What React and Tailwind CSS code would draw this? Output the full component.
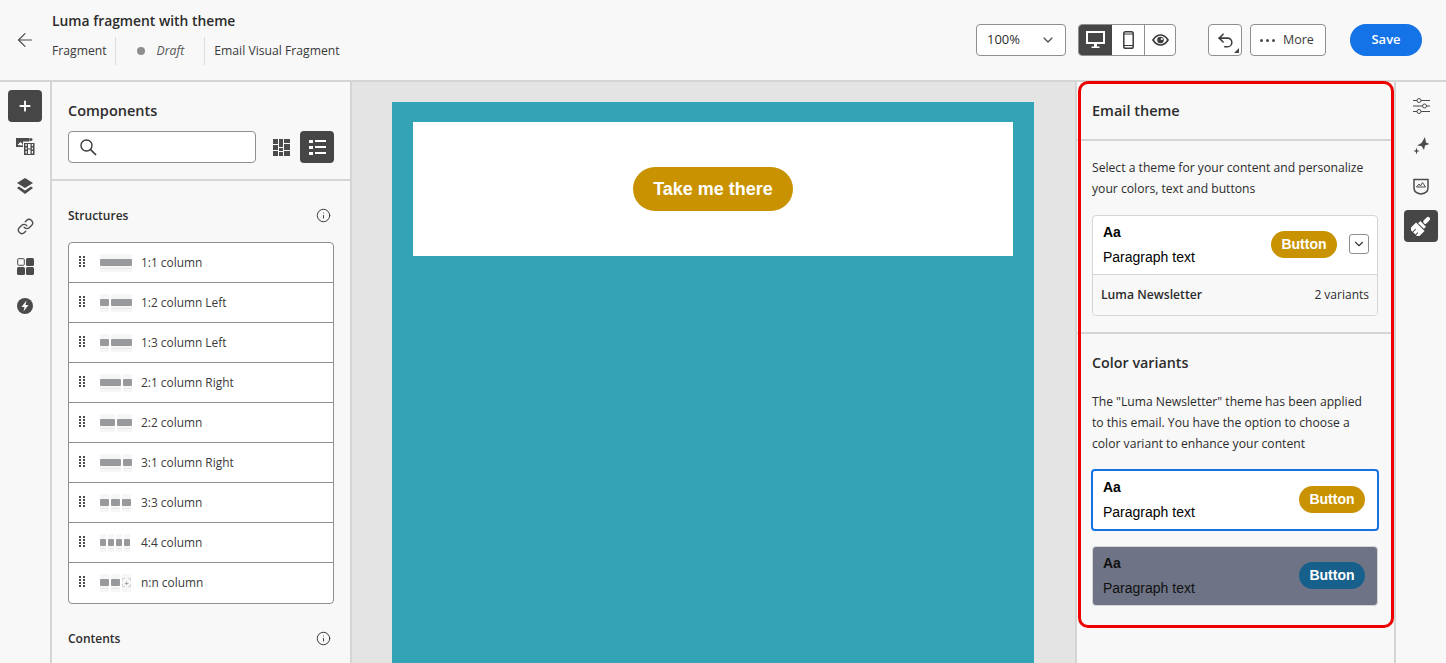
import React from 'react';
import { ArrowLeft, ChevronDown, Plus, Info, Link, Undo2 } from 'lucide-react';

const structures = [
  { label: '1:1 column', cols: [32] },
  { label: '1:2 column Left', cols: [9, 21] },
  { label: '1:3 column Left', cols: [9, 21] },
  { label: '2:1 column Right', cols: [21, 9] },
  { label: '2:2 column', cols: [15, 15] },
  { label: '3:1 column Right', cols: [21, 9] },
  { label: '3:3 column', cols: [9, 9, 9] },
  { label: '4:4 column', cols: [6, 6, 6, 6] },
  { label: 'n:n column', cols: [9, 9], more: true },
];

function Grip() {
  return (
    <svg width="6" height="11" viewBox="0 0 6 11" fill="#4b4b4b" className="shrink-0 mb-[2px]">
      {[0, 3, 6, 9].map((y) => (
        <g key={y}>
          <rect x="0" y={y} width="2" height="2" />
          <rect x="4" y={y} width="2" height="2" />
        </g>
      ))}
    </svg>
  );
}

function ColThumb({ cols, more }) {
  return (
    <div className="flex w-[32px] h-[18px] gap-[2px] shrink-0">
      {cols.map((w, i) => (
        <div key={i} className="flex flex-col bg-[#f6f6f6]" style={{ width: w }}>
          <div className="h-[5px]" />
          <div className="h-[7px] bg-[#97999c] rounded-[1px]" />
          <div className="h-[1px] mt-[2px] bg-[#e8e8e8]" />
        </div>
      ))}
      {more && (
        <div className="w-[9px] flex flex-col bg-[#f6f6f6]">
          <div className="h-[9px] mt-[4px] border border-dashed border-[#d5d5d5] text-[8px] leading-[7px] text-center text-[#777]">+</div>
        </div>
      )}
    </div>
  );
}

function ThemeSample({ extra, color, dark }) {
  return (
    <div className={`flex items-center justify-between h-[58px] pl-[10px] font-['Liberation_Sans',Arial,sans-serif] ${extra ? 'pr-[8px]' : 'pr-[12px]'} ${dark ? 'text-[#111]' : 'text-black'}`}>
      <div className="mt-[2px]">
        <div className="text-[14px] leading-[16px] font-bold mt-[-3px]">Aa</div>
        <div className="text-[14px] leading-[16px] mt-[9px]">Paragraph text</div>
      </div>
      <div className="flex items-center gap-[12px] mt-[-2px]">
        <div className={`w-[66px] h-[27px] rounded-full ${color} text-white text-[14px] font-bold flex items-center justify-center`}>Button</div>
        {extra}
      </div>
    </div>
  );
}

function RailBtn({ active, children }) {
  return (
    <div className={`w-[34px] h-[32px] rounded-[4px] flex items-center justify-center ${active ? 'bg-[#464646] text-white' : 'text-[#4b4b4b]'}`}>
      {children}
    </div>
  );
}

export default function App() {
  return (
    <div className="relative w-[1446px] h-[663px] overflow-hidden bg-[#f8f8f8] text-[#2c2c2c] font-['Open_Sans','Noto_Sans',sans-serif] text-[12.15px]">
      {/* Top bar */}
      <div className="h-[82px] border-b-2 border-[#d5d5d5] flex items-center">
        <ArrowLeft className="w-[22px] h-[22px] ml-[14px] mr-[16px] text-[#4b4b4b]" strokeWidth={1.3} />
        <div className="w-[320px]">
          <div className="text-[13.85px] font-semibold leading-[20px] mt-[-4px]">Luma fragment with theme</div>
          <div className="flex items-center h-[28px] mt-[6px] text-[#3a3a3a] text-[12.2px]">
            <span className="pr-[8px]">Fragment</span>
            <div className="w-[1px] h-[28px] bg-[#dcdcdc]" />
            <span className="w-[8px] h-[8px] rounded-full bg-[#8e8e8e] ml-[21px]" />
            <span className="italic text-[#555] ml-[12px] mr-[20px]">Draft</span>
            <div className="w-[1px] h-[28px] bg-[#dcdcdc]" />
            <span className="ml-[9px]">Email Visual Fragment</span>
          </div>
        </div>
        <div className="flex items-center ml-auto pr-[24px]">
          <div className="w-[90px] h-[32px] bg-white border border-[#8f8f8f] rounded-[4px] flex items-center justify-between pl-[10px] pr-[9px] text-[13px]">
            100%
            <ChevronDown className="w-[16px] h-[16px] text-[#4b4b4b]" strokeWidth={1.8} />
          </div>
          <div className="ml-[12px] h-[32px] flex border border-[#8f8f8f] rounded-[4px] bg-white overflow-hidden">
            <div className="w-[34px] -my-px -ml-px bg-[#464646] flex items-center justify-center">
              <svg width="19" height="18" viewBox="0 0 19 18" fill="#fff">
                <path fillRule="evenodd" d="M0 0h19v13H0zm2 2v9h15V2z" />
                <path d="M8 13h3v2.500H8zM5.500 15.500h8V17h-8z" />
              </svg>
            </div>
            <div className="w-[33px] border-r border-[#8f8f8f] flex items-center justify-center">
              <svg width="11" height="18" viewBox="0 0 11 18" fill="none" stroke="#3c3c3c">
                <rect x="0.800" y="0.800" width="9.400" height="16.400" rx="1.800" strokeWidth="1.500" />
                <path d="M1 3h9" strokeWidth="1" />
                <path d="M1 14.500h9" strokeWidth="1" />
              </svg>
            </div>
            <div className="w-[30px] flex items-center justify-center">
              <svg width="17" height="12" viewBox="0 0 17 12" fill="none">
                <path d="M1 6c2-3.200 4.500-5 7.500-5s5.500 1.800 7.500 5c-2 3.200-4.500 5-7.500 5S3 9.200 1 6z" stroke="#3c3c3c" strokeWidth="1.700" />
                <circle cx="8.500" cy="6" r="3.300" fill="#3c3c3c" />
                <circle cx="9.800" cy="5" r="1.100" fill="#fff" />
              </svg>
            </div>
          </div>
          <div className="relative ml-[32px] w-[34px] h-[32px] bg-white border border-[#8f8f8f] rounded-[4px] flex items-center justify-center text-[#3c3c3c]">
            <Undo2 className="w-[19px] h-[19px]" strokeWidth={1.9} />
            <div className="absolute right-[2px] bottom-[2px] w-0 h-0 border-l-[5px] border-l-transparent border-b-[5px] border-b-[#4b4b4b]" />
          </div>
          <div className="ml-[8px] w-[76px] h-[32px] bg-white border border-[#8f8f8f] rounded-[4px] flex items-center pl-[9px] text-[12.5px] text-[#3c3c3c]">
            <span className="flex gap-[3px] mr-[8px]">
              <span className="w-[3px] h-[3px] rounded-full bg-[#4b4b4b]" />
              <span className="w-[3px] h-[3px] rounded-full bg-[#4b4b4b]" />
              <span className="w-[3px] h-[3px] rounded-full bg-[#4b4b4b]" />
            </span>
            More
          </div>
          <div className="ml-[24px] w-[72px] h-[32px] rounded-full bg-[#1473e6] text-white font-semibold text-[13px] flex items-center justify-center">Save</div>
        </div>
      </div>

      <div className="flex h-[581px]">
        {/* Left rail */}
        <div className="w-[52px] shrink-0 border-r-2 border-[#d5d5d5] flex flex-col items-center pt-[8px] gap-[8px]">
          <RailBtn active><Plus className="w-[16px] h-[16px]" strokeWidth={2.8} /></RailBtn>
          <RailBtn>
            <svg width="19" height="18" viewBox="0 0 19 18" fill="#4b4b4b">
              <path d="M0 1h13.500v3.500H7V10H0z" />
              <path d="M1.500 8l3-3 2 2V8.500z" fill="#fff" />
              <path fillRule="evenodd" d="M8 6h10.500v12H8zm1.500 1v2h1.300V7zm0 3.500v2h1.300v-2zm0 3.500v2.500h1.300V14zm6.300-7v2H17V7zm0 3.500v2H17v-2zm0 3.500v2.500H17V14zM12 7v4.500h2.500V7zm0 5.500V17h2.500v-4.500z" />
              <circle cx="15" cy="2.500" r="1.500" />
            </svg>
          </RailBtn>
          <RailBtn>
            <svg width="18" height="18" viewBox="0 0 18 18" fill="#4b4b4b">
              <path d="M9 1l8 5-8 5-8-5z" />
              <path d="M3 9.500L1 11l8 6 8-6-2-1.500L9 13.500z" />
            </svg>
          </RailBtn>
          <RailBtn><Link className="w-[17px] h-[17px]" strokeWidth={1.9} /></RailBtn>
          <RailBtn>
            <svg width="17" height="17" viewBox="0 0 17 17">
              <rect x="0.700" y="0.700" width="6.600" height="6.600" rx="1" fill="none" stroke="#4b4b4b" />
              <rect x="9" y="0" width="8" height="8" rx="1.500" fill="#4b4b4b" />
              <rect x="0" y="9" width="8" height="8" rx="1.500" fill="#4b4b4b" />
              <rect x="9" y="9" width="8" height="8" rx="1.500" fill="#4b4b4b" />
            </svg>
          </RailBtn>
          <RailBtn>
            <svg width="16" height="16" viewBox="0 0 16 16">
              <circle cx="8" cy="8" r="8" fill="#4b4b4b" />
              <path d="M9.500 2.500L4.500 9h3l-1 4.500L11.500 7h-3z" fill="#fff" />
            </svg>
          </RailBtn>
        </div>

        {/* Components panel */}
        <div className="w-[300px] shrink-0 border-r-2 border-[#d5d5d5]">
          <div className="h-[99px] border-b-2 border-[#d5d5d5] px-[16px]">
            <div className="text-[14.5px] font-semibold leading-[20px] pt-[19px] h-[49px]">Components</div>
            <div className="flex items-center">
              <div className="w-[188px] h-[32px] shrink-0 bg-white border border-[#8f8f8f] rounded-[4px] flex items-center pl-[11px]">
                <svg width="17" height="17" viewBox="0 0 17 17" fill="none" stroke="#3c3c3c" strokeWidth="1.400">
                  <circle cx="6.500" cy="6.500" r="5.500" />
                  <path d="M10.500 10.500l5.500 5.500" strokeWidth="1.700" />
                </svg>
              </div>
              <svg width="17" height="17" viewBox="0 0 17 17" fill="#4b4b4b" className="ml-[17px] shrink-0">
                <path d="M0 0h5v5H0zM0 6h5v5H0zM0 12h5v5H0zM6 0h4v8H6zM6 9h4v3H6zM6 13h4v4H6zM11 0h6v4h-6zM11 5h6v6h-6zM11 12h6v5h-6z" />
              </svg>
              <div className="ml-[10px] w-[34px] h-[32px] shrink-0 rounded-[4px] bg-[#464646] flex items-center justify-center">
                <svg width="17" height="15" viewBox="0 0 17 15" fill="#fff">
                  <path d="M0 0h4v3H0zM0 6h4v3H0zM0 12h4v3H0zM6 0h11v2H6zM6 6h11v2H6zM6 12h11v2H6z" />
                </svg>
              </div>
            </div>
          </div>
          <div className="flex items-center justify-between pl-[16px] pr-[20px] h-[70px]">
            <span className="font-semibold text-[12px]">Structures</span>
            <Info className="w-[15px] h-[15px] text-[#3c3c3c] mr-[-1px] mt-[-2px]" strokeWidth={1.6} />
          </div>
          <div className="mx-[16px] w-[266px] -mt-[9px] bg-white border border-[#8f8f8f] rounded-[4px]">
            {structures.map((s, i) => (
              <div key={s.label} className={`h-[40px] flex items-center pl-[10px] border-b ${i < structures.length - 1 ? 'border-[#8f8f8f]' : 'border-transparent'}`}>
                <Grip />
                <div className="ml-[15px] mr-[9px]"><ColThumb cols={s.cols} more={s.more} /></div>
                <span className="text-[11.9px] text-[#3a3a3a] mt-[1px]">{s.label}</span>
              </div>
            ))}
          </div>
          <div className="flex items-center justify-between pl-[16px] pr-[20px] mt-[25px] h-[20px]">
            <span className="font-semibold text-[12px]">Contents</span>
            <Info className="w-[15px] h-[15px] text-[#3c3c3c] mr-[-1px] mt-[-2px]" strokeWidth={1.6} />
          </div>
        </div>

        {/* Canvas */}
        <div className="w-[723px] shrink-0 bg-[#e4e4e4] pl-[40px] pt-[20px]">
          <div className="w-[642px] h-[600px] bg-[#33a3b6] pt-[20px] pl-[21px]">
            <div className="w-[600px] h-[134px] bg-white flex items-center justify-center">
              <div className="w-[160px] h-[44px] rounded-[22px] bg-[#c99200] text-white font-bold text-[18px] flex items-center justify-center font-['Liberation_Sans',Arial,sans-serif]">Take me there</div>
            </div>
          </div>
        </div>

        {/* Email theme panel */}
        <div className="w-[321px] shrink-0 border-l-2 border-r-2 border-[#d5d5d5]">
          <div className="h-[59px] border-b-2 border-[#d5d5d5] pl-[15px] flex items-center">
            <span className="text-[14.5px] font-semibold">Email theme</span>
          </div>
          <div className="pl-[15px] pr-[16px] h-[193px] border-b-2 border-[#d5d5d5]">
            <p className="leading-[21px] pt-[16px]">Select a theme for your content and personalize your colors, text and buttons</p>
            <div className="mt-[16px] border border-[#d5d5d5] rounded-[4px] bg-white overflow-hidden">
              <ThemeSample
                color="bg-[#c99200]"
                extra={
                  <div className="w-[20px] h-[20px] border border-[#8f8f8f] rounded-[3px] flex items-center justify-center">
                    <ChevronDown className="w-[14px] h-[14px] text-[#3c3c3c]" strokeWidth={2} />
                  </div>
                }
              />
              <div className="h-[41px] border-t border-[#d5d5d5] bg-[#f8f8f8] flex items-center justify-between pl-[8px] pr-[8px] text-[12px]">
                <span className="font-semibold text-[12.2px]">Luma Newsletter</span>
                <span>2 variants</span>
              </div>
            </div>
          </div>
          <div className="pl-[15px] pr-[16px]">
            <div className="text-[14.3px] font-semibold leading-[20px] pt-[19px]">Color variants</div>
            <p className="leading-[21px] pt-[18px] pr-[10px]">The "Luma Newsletter" theme has been applied to this email. You have the option to choose a color variant to enhance your content</p>
            <div className="-mx-[1px] mt-[15px] border-2 border-[#1473e6] rounded-[4px] bg-white">
              <ThemeSample color="bg-[#c99200]" />
            </div>
            <div className="mt-[15px] border border-[#d5d5d5] rounded-[4px] bg-[#6e7385]">
              <ThemeSample color="bg-[#17608c]" dark />
            </div>
          </div>
        </div>

        {/* Right rail */}
        <div className="flex-1 flex flex-col items-center pt-[8px] gap-[8px]">
          <RailBtn>
            <svg width="17" height="16" viewBox="0 0 17 16" fill="#f8f8f8" stroke="#4b4b4b" strokeWidth="1">
              <path d="M0 2.500h17M0 8h17M0 13.500h17" />
              <circle cx="6" cy="2.500" r="2" />
              <circle cx="11.500" cy="8" r="2" />
              <circle cx="6" cy="13.500" r="2" />
            </svg>
          </RailBtn>
          <RailBtn>
            <svg width="18" height="18" viewBox="0 0 18 18" fill="#4b4b4b">
              <path d="M13 0l1 5.500 3.500 1.500-4.500 1.500L12 13 9.500 9 5 8.500l4.500-2.500z" />
              <path d="M4.500 10.500l.8 2.700 2.200.8-2.200.8-.8 2.700-.8-2.700-2.200-.8 2.200-.8z" />
            </svg>
          </RailBtn>
          <RailBtn>
            <svg width="16" height="18" viewBox="0 0 16 18" fill="none" stroke="#4b4b4b">
              <path d="M1 2.500h14V11c0 3.500-3.500 5.500-7 6-3.500-.5-7-2.500-7-6z" strokeWidth="1.500" />
              <path d="M3.500 10l2.500-3 1.500 2 2-3.500 3 4.500z" strokeWidth="1" />
            </svg>
          </RailBtn>
          <RailBtn active>
            <svg width="20" height="20" viewBox="0 0 20 20" fill="#fff">
              <g transform="rotate(45 10 10)">
                <rect x="8" y="-2" width="4" height="8" rx="2" />
                <rect x="6" y="7" width="8" height="3" />
                <path d="M4 11h12v9h-3v-3h-1v3H9v-4H8v4H4z" />
              </g>
            </svg>
          </RailBtn>
        </div>
      </div>

      {/* Red highlight over the panel */}
      <div className="absolute left-[1078px] top-[81px] w-[316px] h-[547px] border-[3px] border-[#ee0000] rounded-[10px] pointer-events-none" />
    </div>
  );
}
